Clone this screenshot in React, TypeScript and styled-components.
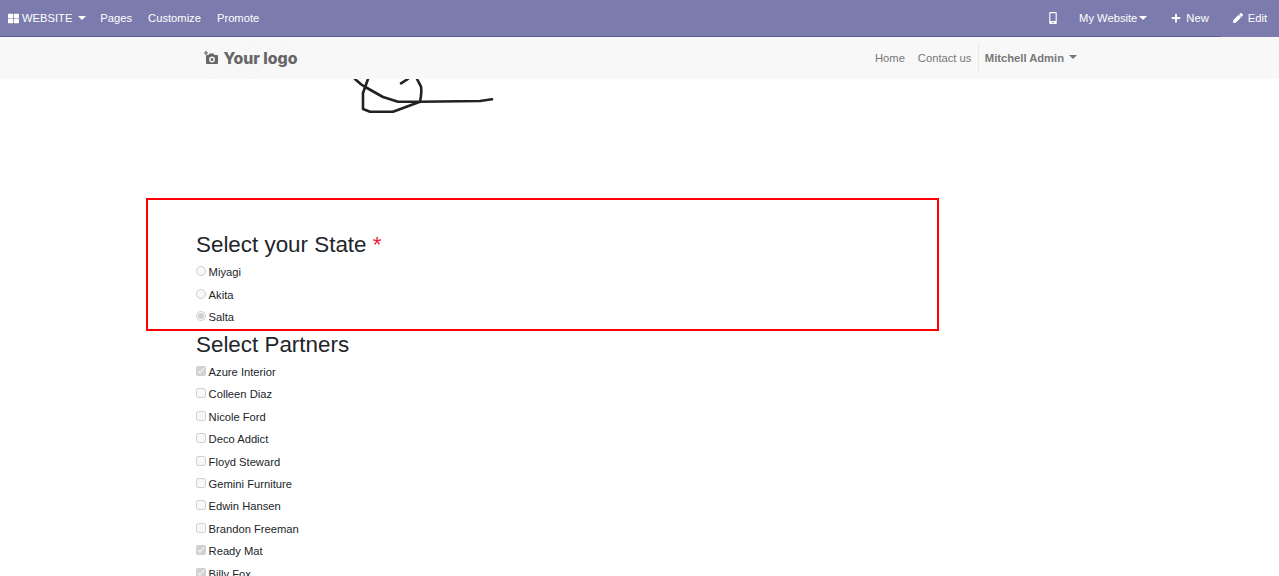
import styled, { createGlobalStyle } from "styled-components";
import { FaMobileAlt, FaPen, FaPlus, FaThLarge } from "react-icons/fa";

const states = [
  { name: "Miyagi", checked: false },
  { name: "Akita", checked: false },
  { name: "Salta", checked: true },
];

const partners = [
  { name: "Azure Interior", checked: true },
  { name: "Colleen Diaz", checked: false },
  { name: "Nicole Ford", checked: false },
  { name: "Deco Addict", checked: false },
  { name: "Floyd Steward", checked: false },
  { name: "Gemini Furniture", checked: false },
  { name: "Edwin Hansen", checked: false },
  { name: "Brandon Freeman", checked: false },
  { name: "Ready Mat", checked: true },
  { name: "Billy Fox", checked: true },
];

export default function App() {
  return (
    <>
      <GlobalStyle />
      <AdminBar>
        <AdminGroup>
          <AppsItem>
            <FaThLarge size={11} />
            WEBSITE
            <Caret />
          </AppsItem>
          <AdminLink>Pages</AdminLink>
          <AdminLink>Customize</AdminLink>
          <AdminLink>Promote</AdminLink>
        </AdminGroup>
        <AdminGroup>
          <PhoneItem>
            <FaMobileAlt size={12} />
          </PhoneItem>
          <WebsiteItem>
            My Website
            <WebsiteCaret />
          </WebsiteItem>
          <ActionItem>
            <FaPlus size={10} />
            New
          </ActionItem>
          <EditItem>
            <FaPen size={10} />
            Edit
          </EditItem>
        </AdminGroup>
      </AdminBar>
      <SiteHeader>
        <Logo>
          <svg width="14" height="14" viewBox="0 0 14 14" aria-hidden="true">
            <path d="M1.4 0v1.4H0v1.2h1.4V4h1.2V2.6H4V1.4H2.6V0z" />
            <path
              fillRule="evenodd"
              d="M5.5 2.5h4L10.5 4H13a1 1 0 0 1 1 1v7a1 1 0 0 1-1 1H3a1 1 0 0 1-1-1V5a1 1 0 0 1 1-1h1.5zM8 5.6a2.9 2.9 0 1 0 0 5.8 2.9 2.9 0 0 0 0-5.8zM8 7a1.5 1.5 0 1 1 0 3 1.5 1.5 0 0 1 0-3z"
            />
          </svg>
          Your logo
        </Logo>
        <SiteNav>
          <SiteLink>Home</SiteLink>
          <SiteLink>Contact us</SiteLink>
          <UserMenu>
            Mitchell Admin
            <UserCaret />
          </UserMenu>
        </SiteNav>
      </SiteHeader>
      <Main>
        <Signature viewBox="0 0 170 40" aria-hidden="true">
          <path d="M15 0 C19 4 23 7 27 9 L43 18 L58 22.7 L80 22.7 L140 22 L152 20.3" />
          <path d="M28 0 L23 14 L23 30 L30 32.7 L53 32.7 L80 22.7 C81.5 16 81.5 11 81 7.7 L77 0" />
          <path d="M61 4.3 L68 0" />
        </Signature>
        <HighlightBox>
          <Heading>
            Select your State <Required>*</Required>
          </Heading>
          {states.map((state) => (
            <OptionRow key={state.name}>
              <RadioInput type="radio" name="state" disabled defaultChecked={state.checked} />
              {state.name}
            </OptionRow>
          ))}
        </HighlightBox>
        <PartnerSection>
          <PartnerHeading>Select Partners</PartnerHeading>
          {partners.map((partner) => (
            <OptionRow key={partner.name}>
              <CheckInput type="checkbox" disabled defaultChecked={partner.checked} />
              {partner.name}
            </OptionRow>
          ))}
        </PartnerSection>
      </Main>
    </>
  );
}

const GlobalStyle = createGlobalStyle`
  html, body {
    margin: 0;
    height: 576px;
    overflow: hidden;
    background: #fff;
    font-family: "Liberation Sans", Arial, sans-serif;
  }
`;

const AdminBar = styled.div`
  display: flex;
  justify-content: space-between;
  height: 37px;
  box-sizing: border-box;
  background: #7c7bad;
  border-bottom: 1px solid #5c5b9b;
  color: #fff;
  font-size: 11.2px;
`;

const AdminGroup = styled.div`
  display: flex;
  align-items: stretch;
`;

const AdminItem = styled.div`
  display: flex;
  align-items: center;
  height: 36px;
  white-space: nowrap;
`;

const AppsItem = styled(AdminItem)`
  gap: 3px;
  padding-left: 8px;
  margin-right: 14px;
`;

const AdminLink = styled(AdminItem)`
  margin-right: 16px;
`;

const PhoneItem = styled(AdminItem)`
  margin-right: 20px;
`;

const WebsiteItem = styled(AdminItem)`
  margin-right: 24px;
`;

const ActionItem = styled(AdminItem)`
  gap: 5px;
  margin-right: 12px;
`;

const EditItem = styled(AdminItem)`
  gap: 5px;
  height: 37px;
  padding: 0 12px 1px 12px;
  box-sizing: border-box;
  background: #7c7bad;
`;

const Caret = styled.span`
  width: 0;
  height: 0;
  margin-left: 3px;
  border-top: 4px solid #fff;
  border-left: 4px solid transparent;
  border-right: 4px solid transparent;
`;

const WebsiteCaret = styled(Caret)`
  margin-left: 2px;
`;

const SiteHeader = styled.header`
  display: flex;
  align-items: center;
  justify-content: space-between;
  height: 42px;
  padding: 0 202px 0 197px;
  background: #f8f8f8;
`;

const Logo = styled.div`
  display: flex;
  align-items: center;
  gap: 5.5px;
  width: 109px;
  height: 31px;
  box-sizing: border-box;
  padding-left: 7px;
  color: #666;
  font-family: Inter, "Liberation Sans", sans-serif;
  font-size: 15.8px;
  font-weight: 800;
  white-space: nowrap;
  background: repeating-linear-gradient(135deg, #f8f8f8 0 6px, #f4f4f4 6px 7px);
  svg {
    fill: #666;
    flex: none;
  }
`;

const SiteNav = styled.nav`
  display: flex;
  align-items: center;
  height: 30px;
  font-size: 11.2px;
  color: #777;
`;

const SiteLink = styled.a`
  margin-right: 13px;
  &:nth-child(2) {
    margin-right: 6.5px;
  }
`;

const UserMenu = styled.div`
  display: flex;
  align-items: center;
  align-self: stretch;
  padding-left: 6px;
  border-left: 1px solid #e9e9e9;
  font-weight: 700;
  color: #777;
`;

const UserCaret = styled(Caret)`
  margin-left: 5px;
  margin-top: -2px;
  border-top-color: #777;
`;

const Main = styled.main`
  display: flex;
  flex-direction: column;
  align-items: flex-start;
  margin-left: 146px;
  color: #212529;
`;

const Signature = styled.svg`
  display: block;
  width: 170px;
  height: 40px;
  margin: 0 0 79px 194px;
  fill: none;
  stroke: #222;
  stroke-width: 2.6;
  stroke-linecap: round;
  stroke-linejoin: round;
`;

const HighlightBox = styled.section`
  box-sizing: border-box;
  width: 793px;
  height: 133px;
  padding: 31px 0 0 48px;
  border: 2px solid #f00;
`;

const PartnerSection = styled.section`
  padding-left: 50px;
`;

const Heading = styled.h4`
  margin: 0 0 3px;
  font-size: 22.4px;
  font-weight: 400;
  line-height: 27px;
`;

const PartnerHeading = styled(Heading)`
  margin-bottom: 2.8px;
`;

const Required = styled.span`
  color: #e8203a;
`;

const OptionRow = styled.label`
  display: flex;
  align-items: center;
  gap: 2.6px;
  height: 22.4px;
  font-size: 11.2px;
  color: #212529;
`;

const RadioInput = styled.input`
  width: 10px;
  height: 10px;
  margin: 0 0 2px;
`;

const CheckInput = styled.input`
  width: 10px;
  height: 10px;
  margin: 0 0 2px;
`;
